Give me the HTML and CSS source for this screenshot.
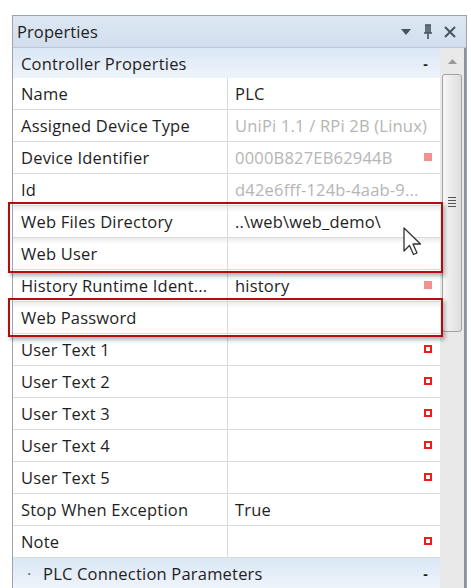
FILE: index.html
```html
<!DOCTYPE html>
<html>
<head>
  <meta charset="UTF-8">
  <title>Properties</title>
  <link rel="stylesheet" href="styles.css">
</head>
<body>

<div class="panel">
  <div class="titlebar">
    <span class="title">Properties</span>
    <span class="tool">
      <svg width="12" height="12" viewBox="0 0 12 12"><polygon points="1,3 11,3 6,9" fill="#4a5260"/></svg>
    </span>
    <span class="tool">
      <svg width="12" height="16" viewBox="0 0 12 16"><path d="M3 1h6M4 1v8M8 1v8M6 1v8M2 9h8M6 9v6" stroke="#4a5260" stroke-width="1.6" fill="none"/></svg>
    </span>
    <span class="tool">
      <svg width="14" height="14" viewBox="0 0 14 14"><path d="M2 2L12 12M12 2L2 12" stroke="#4a5260" stroke-width="2"/></svg>
    </span>
  </div>

  <div class="content">
    <div class="grid">
      <div class="cat"><span class="cat-name">Controller Properties</span><span class="cat-toggle">-</span></div>

      <div class="row"><div class="key">Name</div><div class="val">PLC</div></div>
      <div class="row"><div class="key">Assigned Device Type</div><div class="val ro">UniPi 1.1 / RPi 2B (Linux)</div></div>
      <div class="row"><div class="key">Device Identifier</div><div class="val ro">0000B827EB62944B<span class="mark fill"></span></div></div>
      <div class="row"><div class="key">Id</div><div class="val ro">d42e6fff-124b-4aab-9...</div></div>

      <div class="hl">
        <div class="row"><div class="key">Web Files Directory</div><div class="val">..\web\web_demo\</div></div>
        <div class="row"><div class="key">Web User</div><div class="val"></div></div>
      </div>

      <div class="row"><div class="key">History Runtime Ident...</div><div class="val">history<span class="mark fill"></span></div></div>

      <div class="hl">
        <div class="row"><div class="key">Web Password</div><div class="val"></div></div>
      </div>

      <div class="row"><div class="key">User Text 1</div><div class="val"><span class="mark"></span></div></div>
      <div class="row"><div class="key">User Text 2</div><div class="val"><span class="mark"></span></div></div>
      <div class="row"><div class="key">User Text 3</div><div class="val"><span class="mark"></span></div></div>
      <div class="row"><div class="key">User Text 4</div><div class="val"><span class="mark"></span></div></div>
      <div class="row"><div class="key">User Text 5</div><div class="val"><span class="mark"></span></div></div>
      <div class="row"><div class="key">Stop When Exception</div><div class="val">True</div></div>
      <div class="row"><div class="key">Note</div><div class="val"><span class="mark"></span></div></div>

      <div class="cat"><span class="cat-name"><span class="dot">&middot;</span>PLC Connection Parameters</span><span class="cat-toggle">-</span></div>
    </div>

    <div class="scrollbar">
      <div class="arrow-up">
        <svg width="9" height="5" viewBox="0 0 9 5"><polygon points="0,5 9,5 4.5,0" fill="#9a9a9a"/></svg>
      </div>
      <div class="thumb">
        <div class="grip"><i></i><i></i><i></i><i></i></div>
      </div>
    </div>
  </div>

  <svg class="cursor" width="20" height="32" viewBox="0 0 20 32">
    <path d="M1 1L1 24L6.5 18.5L10.5 27.5L14 26L10 17L17.5 17Z" fill="#fff" stroke="#333" stroke-width="1.3" stroke-linejoin="round"/>
  </svg>
</div>

</body>
</html>
```

FILE: styles.css
```css
body {
	margin: 0;
	background: #fff;
	font-family: "Open Sans", "Noto Sans", sans-serif;
	color: #1e1e1e;
}

/* Tool window frame */
.panel {
	position: relative;
	margin: 15px 0 0 12px;
	width: 453px;
	border: 1px solid #9ca4ae;
	border-bottom: none;
	height: 600px;
	background: #eaeaea;
}

.titlebar {
	height: 31px;
	display: flex;
	align-items: center;
	padding: 0 6px 0 4px;
	background: linear-gradient(#dde7f3, #d2deed);
	border-bottom: 1px solid #b8c6d8;
}

.title {
	flex: 1;
	font-size: 16.5px;
	letter-spacing: 0.1px;
}

.tool {
	display: flex;
	align-items: center;
	justify-content: center;
	width: 20px;
	height: 20px;
	margin-left: 2px;
}

/* Grid + scrollbar */
.content {
	display: flex;
}

.grid {
	width: 428px;
	background: #fff;
}

.cat {
	height: 30px;
	display: flex;
	align-items: center;
	padding: 0 12px 0 8px;
	background: linear-gradient(#dbe7f5, #eef4fb);
	font-size: 16.5px;
	letter-spacing: 0.2px;
}

.cat-name {
	flex: 1;
}

.cat-toggle {
	font-weight: bold;
	font-size: 14px;
}

.dot {
	display: inline-block;
	width: 22px;
	padding-left: 6px;
	box-sizing: border-box;
	color: #666;
}

.row {
	height: 32px;
	display: flex;
	border-bottom: 1px solid #dadada;
	box-sizing: border-box;
	font-size: 16.5px;
	letter-spacing: 0.2px;
}

.key {
	width: 215px;
	box-sizing: border-box;
	padding-left: 8px;
	display: flex;
	align-items: center;
	border-right: 1px solid #dadada;
	white-space: nowrap;
}

.val {
	flex: 1;
	position: relative;
	display: flex;
	align-items: center;
	padding-left: 7px;
	white-space: nowrap;
}

.val.ro {
	color: #b5b5b5;
}

/* Small red markers on the right */
.mark {
	position: absolute;
	right: 8px;
	top: 11px;
	width: 8px;
	height: 8px;
	border: 2px solid #ee1c1c;
	box-sizing: border-box;
	background: #fff;
}

.mark.fill {
	border: none;
	background: #f59090;
}

/* Red highlight boxes drawn over the rows */
.hl {
	position: relative;
}

.hl .row {
	background: linear-gradient(#ececec, #fff 6px);
}

.hl::after {
	content: "";
	position: absolute;
	left: -5px;
	right: -3px;
	top: -4px;
	bottom: -3px;
	border: 2px solid #b20d0d;
	box-shadow: 2px 3px 4px rgba(0, 0, 0, 0.3);
	pointer-events: none;
}

.scrollbar {
	width: 24px;
	border-right: 2px solid #8c9299;
	background: #e9e9e9;
	display: flex;
	flex-direction: column;
	align-items: center;
}

.arrow-up {
	height: 26px;
	display: flex;
	align-items: center;
	justify-content: center;
}

.thumb {
	width: 18px;
	height: 256px;
	border: 1px solid #a3a3a3;
	border-radius: 3px;
	background: linear-gradient(90deg, #f6f6f6, #dedede);
	display: flex;
	align-items: center;
	justify-content: center;
}

.grip {
	display: flex;
	flex-direction: column;
	gap: 2px;
	margin-top: -2px;
}

.grip i {
	display: block;
	width: 8px;
	height: 1px;
	background: #555;
}

.cursor {
	position: absolute;
	left: 390px;
	top: 211px;
}
```
